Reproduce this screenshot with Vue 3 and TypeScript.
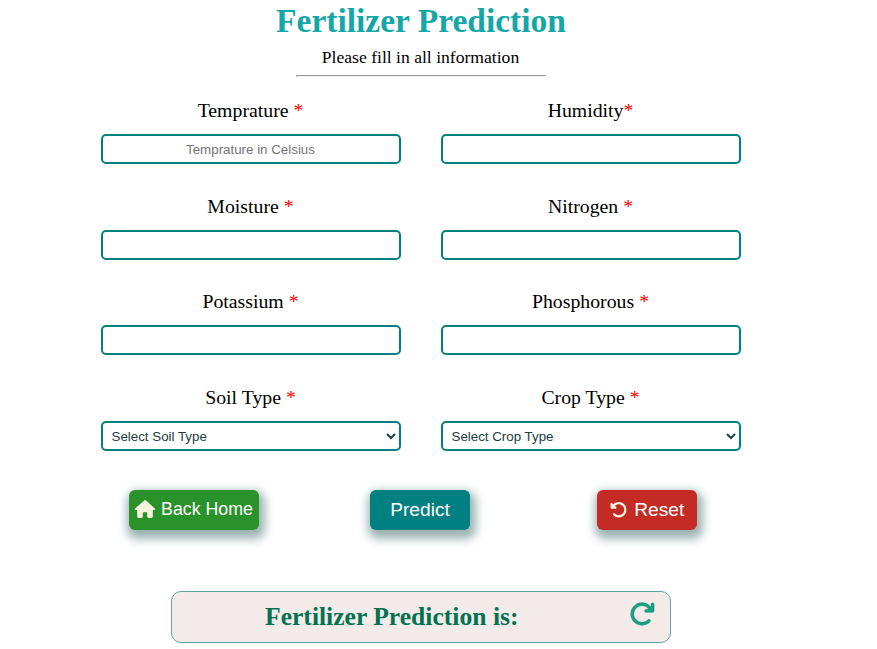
<script setup lang="ts">
import { ref } from 'vue'

interface Field {
  id: string
  label: string
  placeholder?: string
  spaced: boolean
}

const fields: Field[] = [
  { id: 'temperature', label: 'Temprature', placeholder: 'Temprature in Celsius', spaced: true },
  { id: 'humidity', label: 'Humidity', spaced: false },
  { id: 'moisture', label: 'Moisture', spaced: true },
  { id: 'nitrogen', label: 'Nitrogen', spaced: true },
  { id: 'potassium', label: 'Potassium', spaced: true },
  { id: 'phosphorous', label: 'Phosphorous', spaced: true },
]

const selects = [
  { id: 'soil', label: 'Soil Type', prompt: 'Select Soil Type' },
  { id: 'crop', label: 'Crop Type', prompt: 'Select Crop Type' },
]

const values = ref<Record<string, string>>({})
const choices = ref<Record<string, string>>({ soil: '', crop: '' })

function reset(): void {
  values.value = {}
  choices.value = { soil: '', crop: '' }
}
</script>

<template>
  <main class="page">
    <h1 class="title">Fertilizer Prediction</h1>
    <p class="subtitle">Please fill in all information</p>
    <hr class="rule" />
    <form @submit.prevent>
      <div class="grid">
        <div v-for="f in fields" :key="f.id" class="field">
          <label class="label" :for="f.id">{{ f.label + (f.spaced ? ' ' : '') }}<span class="star">*</span></label>
          <input :id="f.id" v-model="values[f.id]" class="control" type="text" :placeholder="f.placeholder" />
        </div>
        <div v-for="s in selects" :key="s.id" class="field">
          <label class="label" :for="s.id">{{ s.label + ' ' }}<span class="star">*</span></label>
          <select :id="s.id" v-model="choices[s.id]" class="control select">
            <option value="">{{ s.prompt }}</option>
          </select>
        </div>
      </div>
      <div class="actions">
        <button type="button" class="btn home">
          <svg class="icon-home" viewBox="0 0 576 512"><path d="M575.8 255.5c0 18-15 32.1-32 32.1h-32l.7 160.2c0 2.7-.2 5.4-.5 8.1V472c0 22.1-17.9 40-40 40H456c-1.1 0-2.2 0-3.3-.1c-1.4 .1-2.8 .1-4.2 .1H416 392c-22.1 0-40-17.9-40-40V448 384c0-17.7-14.3-32-32-32H256c-17.7 0-32 14.3-32 32v64 24c0 22.1-17.9 40-40 40H160 128.1c-1.5 0-3-.1-4.5-.2c-1.2 .1-2.4 .2-3.6 .2H104c-22.1 0-40-17.9-40-40V360c0-.9 0-1.9 .1-2.8V287.6H32c-18 0-32-14-32-32.1c0-9 3-17 10-24L266.4 8c7-7 15-8 22-8s15 2 21 7L564.8 231.5c8 7 12 15 11 24z" /></svg>
          <span>Back Home</span>
        </button>
        <button type="submit" class="btn predict"><span>Predict</span></button>
        <button type="button" class="btn reset" @click="reset">
          <svg class="icon-reset" viewBox="0 0 512 512"><path d="M48.500 224H40c-13.300 0-24-10.700-24-24V72c0-9.700 5.800-18.500 14.800-22.200s19.300-1.700 26.200 5.200L98.600 96.600c87.600-86.500 228.700-86.200 315.800 1c87.500 87.500 87.500 229.300 0 316.800s-229.300 87.500-316.800 0c-12.500-12.500-12.500-32.800 0-45.300s32.800-12.500 45.300 0c62.500 62.500 163.800 62.500 226.300 0s62.500-163.800 0-226.300c-62.200-62.200-162.700-62.500-225.300-1L185 183c6.900 6.900 8.900 17.200 5.200 26.200s-12.500 14.800-22.200 14.800H48.500z" /></svg>
          <span>Reset</span>
        </button>
      </div>
    </form>
    <section class="result">
      <h2 class="result-title">Fertilizer Prediction is:</h2>
      <svg class="icon-refresh" viewBox="0 0 512 512"><path d="M386.3 160H336c-17.7 0-32 14.3-32 32s14.3 32 32 32H464c17.7 0 32-14.3 32-32V64c0-17.7-14.3-32-32-32s-32 14.3-32 32v51.2L414.400 97.600c-87.500-87.500-229.300-87.500-316.800 0s-87.500 229.300 0 316.800s229.300 87.500 316.800 0c12.500-12.500 12.500-32.800 0-45.300s-32.800-12.500-45.300 0c-62.500 62.500-163.800 62.500-226.300 0s-62.500-163.800 0-226.300s163.800-62.500 226.300 0L386.3 160z" /></svg>
    </section>
  </main>
</template>

<style>
body {
  background: #fff;
}
</style>

<style scoped>
.page {
  width: 842px;
  height: 649px;
  overflow: hidden;
  display: flex;
  flex-direction: column;
  align-items: center;
  font-family: "Liberation Serif", serif;
  color: #000;
}
.title {
  margin: 0;
  height: 42px;
  line-height: 42px;
  font-size: 33.5px;
  color: #14a7a7;
}
.subtitle {
  margin: 5px 1px 0 0;
  height: 20px;
  line-height: 20px;
  font-size: 17.6px;
}
.rule {
  width: 248px;
  margin: 8px 0 0;
}
.grid {
  display: grid;
  grid-template-columns: 300px 300px;
  column-gap: 40px;
  margin-top: 21px;
}
.field {
  height: 95.6px;
  display: flex;
  flex-direction: column;
}
.label {
  height: 24px;
  line-height: 24px;
  margin: 0 1px 12px 0;
  font-size: 19.8px;
  text-align: center;
  white-space: pre;
}
.star {
  color: red;
}
.control {
  box-sizing: border-box;
  width: 300px;
  height: 30px;
  padding: 1px 3px 1px 2px;
  border: 2px solid teal;
  border-radius: 5px;
  background: #fff;
  font: 13.333px "Liberation Sans", sans-serif;
  text-align: center;
  outline: none;
}
.select {
  padding: 2px 1px 0 4.5px;
  text-align: left;
  color: #1d4040;
}
.actions {
  display: flex;
  width: 568px;
  margin: 10px 0 0 28px;
}
.btn {
  display: flex;
  align-items: center;
  justify-content: center;
  box-sizing: border-box;
  height: 40px;
  padding: 0;
  border: 0;
  border-radius: 6px;
  color: #fff;
  font: 19.2px/22px "Liberation Sans", sans-serif;
  box-shadow: 2px 5px 10px 4px rgba(35, 85, 85, 0.45);
}
.btn svg {
  fill: beige;
}
.home {
  width: 130px;
  gap: 6px;
  padding-bottom: 2px;
  font-size: 17.8px;
  background: #2a922a;
}
.predict {
  width: 100px;
  margin: 0 127px 0 111px;
  background: teal;
}
.reset {
  width: 100px;
  gap: 7px;
  background: #c42b25;
}
.icon-home {
  width: 20px;
  height: 18px;
}
.icon-reset {
  width: 17.5px;
  height: 17.5px;
  margin-bottom: 1px;
}
.result {
  box-sizing: border-box;
  width: 500px;
  height: 52px;
  margin-top: 61px;
  padding: 0 15px 0 93px;
  display: flex;
  justify-content: space-between;
  border: 1px solid #5fa5a5;
  border-radius: 10px;
  background: #f3eaea;
}
.result-title {
  margin: 0;
  line-height: 50px;
  font-size: 25.6px;
  color: #04724f;
}
.icon-refresh {
  width: 26px;
  height: 26px;
  margin-top: 9px;
  fill: #1a9d80;
  stroke: #1a9d80;
  stroke-width: 6;
}
</style>
